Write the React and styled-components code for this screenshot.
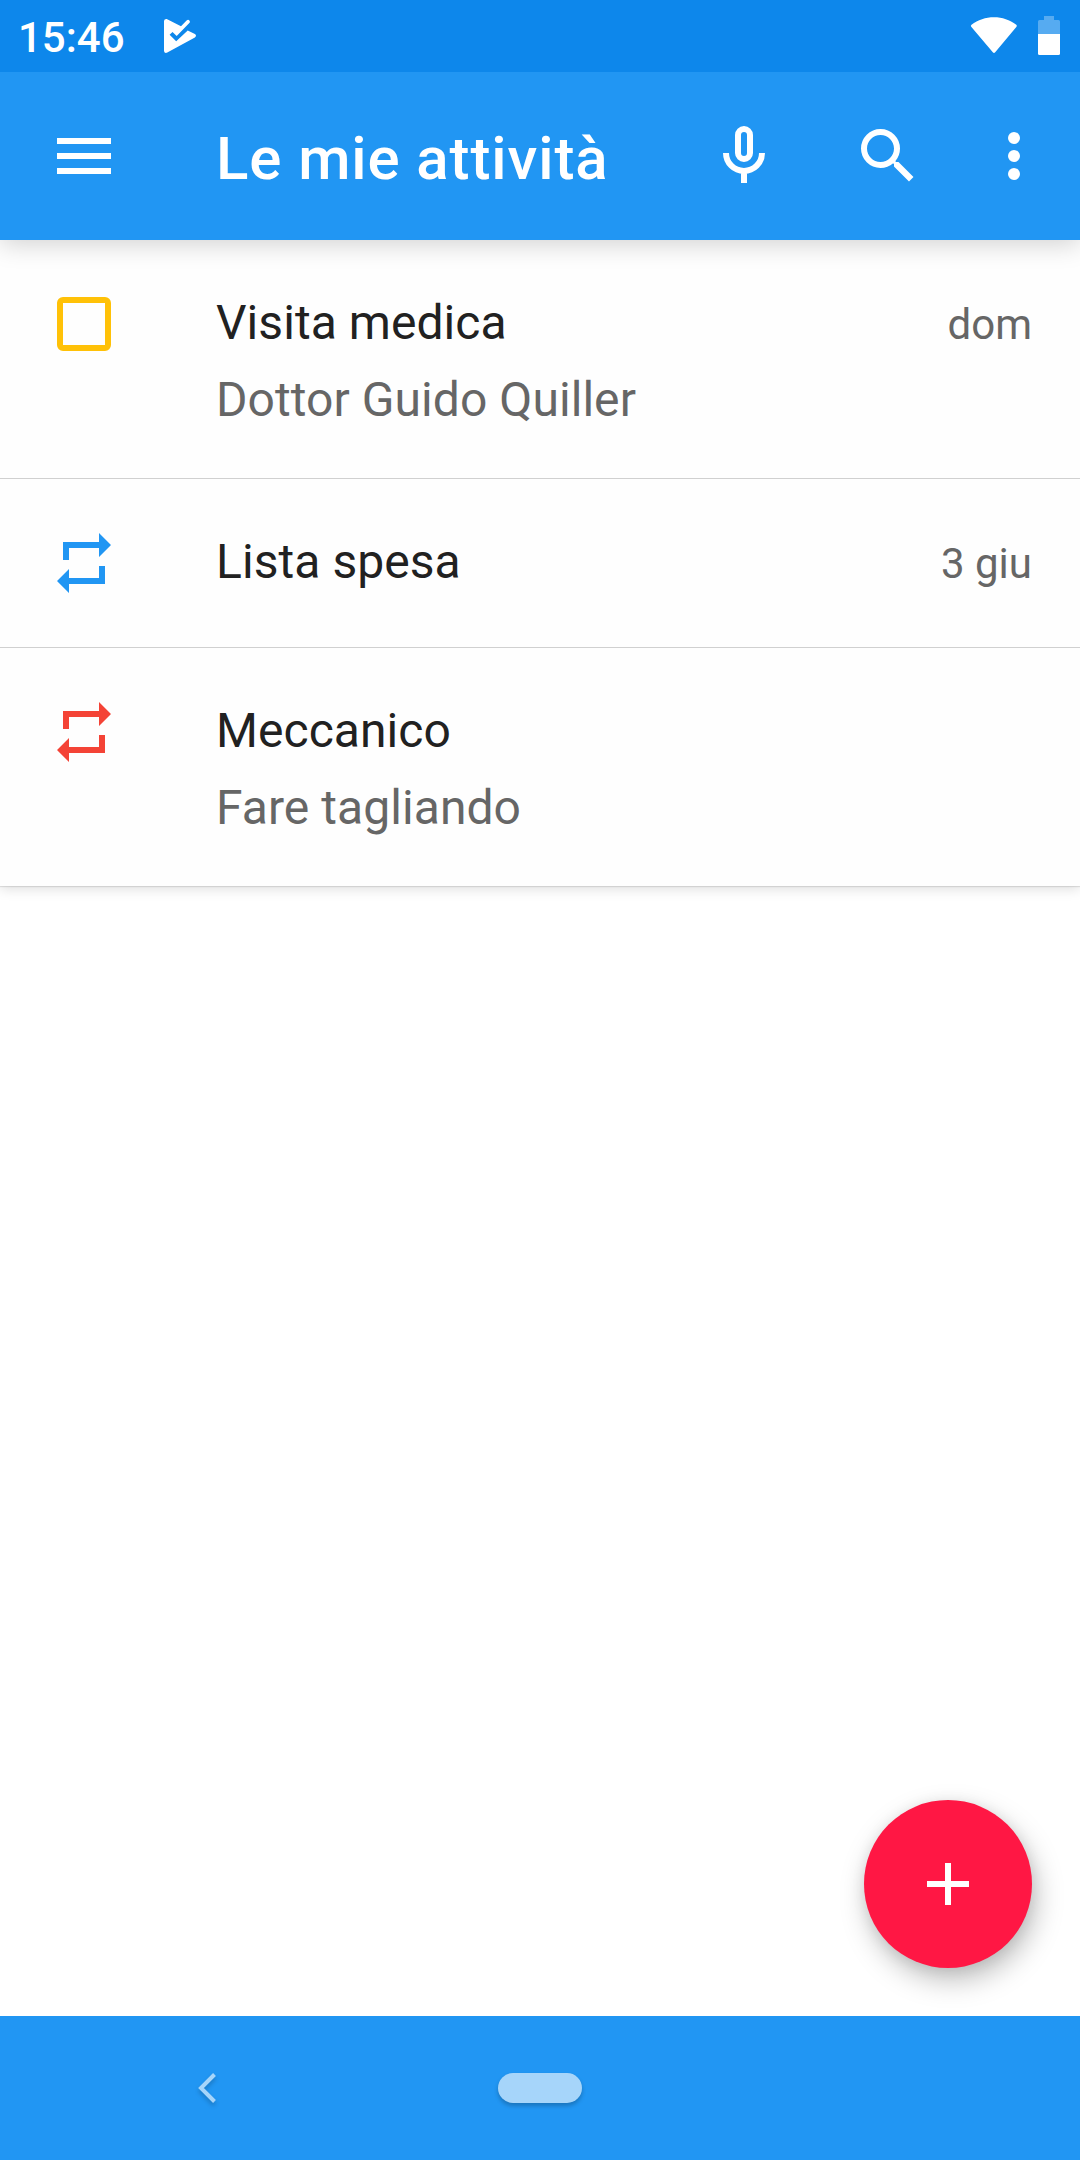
import styled, { createGlobalStyle } from 'styled-components'

const TASKS = [
	{ id: 1, icon: 'checkbox', color: '#ffc107', title: 'Visita medica', note: 'Dottor Guido Quiller', date: 'dom' },
	{ id: 2, icon: 'repeat', color: '#2196f3', title: 'Lista spesa', date: '3 giu' },
	{ id: 3, icon: 'repeat', color: '#f44336', title: 'Meccanico', note: 'Fare tagliando' }
]

const ICONS = {
	menu: <path d='M3 18h18v-2H3v2zm0-5h18v-2H3v2zm0-7v2h18V6H3z' />,
	mic: (
		<g fill='none' stroke='currentColor' strokeWidth='2'>
			<rect x='10' y='3' width='4' height='10' rx='2' />
			<path d='M6 11a6 6 0 0 0 12 0M12 17v4' />
		</g>
	),
	search: (
		<path d='M15.5 14h-.79l-.28-.27A6.471 6.471 0 0 0 16 9.5 6.5 6.5 0 1 0 9.5 16c1.61 0 3.09-.59 4.23-1.57l.27.28v.79l5 4.99L20.49 19l-4.99-5zm-6 0C7.01 14 5 11.99 5 9.5S7.01 5 9.5 5 14 7.01 14 9.5 11.99 14 9.5 14z' />
	),
	more: (
		<>
			<circle cx='12' cy='6' r='2' />
			<circle cx='12' cy='12' r='2' />
			<circle cx='12' cy='18' r='2' />
		</>
	),
	checkbox: (
		<path
			fillRule='evenodd'
			d='M5 3h14a2 2 0 0 1 2 2v14a2 2 0 0 1-2 2H5a2 2 0 0 1-2-2V5a2 2 0 0 1 2-2zm0 2v14h14V5z'
		/>
	),
	repeat: <path d='M7 7h10v3l4-4-4-4v3H5v6h2V7zm10 10H7v-3l-4 4 4 4v-3h12v-6h-2v4z' />,
	add: <path d='M19 13h-6v6h-2v-6H5v-2h6V5h2v6h6v2z' />
}

function Icon({ name, color }) {
	return (
		<IconSvg viewBox='0 0 24 24' $color={color}>
			{ICONS[name]}
		</IconSvg>
	)
}

function StatusBar() {
	return (
		<StatusWrapper>
			<Clock>15:46</Clock>
			<svg width='34' height='36' viewBox='0 0 34 36' fill='#fff'>
				<path d='M1 3Q1.200.8 3.700 1L18 8.200l5.600-5.800q1.600-1.200 2.700 0 1.200 1.200 0 2.600L13.700 17.900l-4.200-3.800-2.900 2.600 6.600 6.600 11.500-10.900 7.200 3.700q2.200 1.600 0 3.300L4.300 34.600Q1.400 35.600 1 33z' />
			</svg>
			<StatusIcons>
				<svg width='48' height='38' viewBox='0 0 48 38' fill='#fff'>
					<path d='M1.500 7.700C8 2.800 15.600.2 24 .2s15.600 2.600 22.300 7.500q1 .9.200 2.100L25.200 35.300q-1.200 1.500-2.400 0L1.200 9.800q-.8-1.200.3-2.100z' />
				</svg>
				<svg width='22' height='40' viewBox='0 0 22 40' fill='#fff'>
					<path d='M6 0h10v4h4.500Q22 4 22 5.500V18H0V5.500Q0 4 1.500 4H6z' opacity='.3' />
					<path d='M0 18h22v19.500q0 1.500-1.500 1.500h-19Q0 39 0 37.500z' />
				</svg>
			</StatusIcons>
		</StatusWrapper>
	)
}

function TaskRow({ task }) {
	return (
		<Row>
			<Icon name={task.icon} color={task.color} />
			<RowText>
				<TaskTitle>{task.title}</TaskTitle>
				{task.note && <TaskNote>{task.note}</TaskNote>}
			</RowText>
			{task.date && <TaskDate>{task.date}</TaskDate>}
		</Row>
	)
}

export default function App() {
	return (
		<Screen>
			<GlobalStyle />
			<StatusBar />
			<AppBar>
				<Icon name='menu' />
				<PageTitle>Le mie attività</PageTitle>
				<Actions>
					<Icon name='mic' />
					<Icon name='search' />
					<Icon name='more' />
				</Actions>
			</AppBar>
			<Content>
				<TaskList>
					{TASKS.map(task => (
						<TaskRow key={task.id} task={task} />
					))}
				</TaskList>
				<AddButton aria-label='Aggiungi'>
					<Icon name='add' />
				</AddButton>
			</Content>
			<NavBar>
				<BackArrow viewBox='0 0 20 30'>
					<path d='M16.500 1.500 3 15l13.500 13.500' />
				</BackArrow>
				<HomePill />
			</NavBar>
		</Screen>
	)
}

const GlobalStyle = createGlobalStyle`
	* {
		box-sizing: border-box;
		margin: 0;
		padding: 0;
	}

	body {
		background: #fff;
		font-family: Roboto, sans-serif;
	}

	svg {
		display: block;
		flex-shrink: 0;
	}
`

const Screen = styled.div`
	width: 1080px;
	height: 2160px;
	display: flex;
	flex-direction: column;
	background: #fff;
	overflow: hidden;
`

const IconSvg = styled.svg`
	width: 72px;
	height: 72px;
	color: ${({ $color }) => $color || '#fff'};
	fill: currentColor;
`

const StatusWrapper = styled.div`
	height: 72px;
	flex-shrink: 0;
	display: flex;
	align-items: center;
	padding: 0 20px 0 18px;
	background: #0d87eb;
	z-index: 3;
`

const Clock = styled.span`
	width: 145px;
	font-size: 42px;
	font-weight: 500;
	line-height: 72px;
	padding-top: 4px;
	color: #fff;
`

const StatusIcons = styled.div`
	margin-left: auto;
	display: flex;
	align-items: center;
	gap: 20px;
`

const AppBar = styled.header`
	height: 168px;
	flex-shrink: 0;
	display: flex;
	align-items: center;
	padding: 0 30px 0 48px;
	background: #2196f3;
	box-shadow: 0 4px 24px rgba(0, 0, 0, 0.18);
	z-index: 2;
`

const PageTitle = styled.h1`
	margin-left: 96px;
	padding-top: 5px;
	font-size: 60px;
	font-weight: 500;
	line-height: 72px;
	letter-spacing: 0.9px;
	color: #fff;
`

const Actions = styled.div`
	margin-left: auto;
	display: flex;

	svg + svg {
		margin-left: 72px;
	}

	svg:last-child {
		margin-left: 54px;
	}
`

const Content = styled.main`
	flex: 1;
	display: flex;
	flex-direction: column;
	justify-content: space-between;
`

const TaskList = styled.ul`
	list-style: none;
	background: #fefefe;
	box-shadow: 0 1px 1px rgba(0, 0, 0, 0.1), 0 3px 12px rgba(0, 0, 0, 0.13);
`

const Row = styled.li`
	display: flex;
	align-items: flex-start;
	min-height: 169px;
	padding: 48px 48px 36px;

	& + & {
		border-top: 1px solid #d0d0d0;
	}
`

const RowText = styled.div`
	flex: 1;
	margin-left: 96px;
	font-size: 48px;
	letter-spacing: 0.06px;
`

const TaskTitle = styled.p`
	line-height: 70px;
	color: #212121;
`

const TaskNote = styled.p`
	line-height: 84px;
	color: #666;
`

const TaskDate = styled.span`
	font-size: 42px;
	line-height: 74px;
	color: #666;
`

const AddButton = styled.button`
	width: 168px;
	height: 168px;
	margin: 0 48px 48px auto;
	display: flex;
	align-items: center;
	justify-content: center;
	border: none;
	border-radius: 50%;
	background: #ff1744;
	box-shadow: 4px 12px 28px rgba(0, 0, 0, 0.26), 0 2px 14px rgba(0, 0, 0, 0.08);
`

const NavBar = styled.nav`
	height: 144px;
	flex-shrink: 0;
	display: flex;
	align-items: center;
	padding-left: 198px;
	background: #2196f3;
	z-index: 1;
`

const BackArrow = styled.svg`
	width: 20px;
	height: 30px;
	fill: none;
	stroke: #a6d5fa;
	stroke-width: 4;
	filter: drop-shadow(0 3px 2px rgba(0, 0, 0, 0.2));
`

const HomePill = styled.div`
	width: 84px;
	height: 30px;
	margin-left: 280px;
	border-radius: 15px;
	background: #a6d5fa;
	box-shadow: 0 3px 4px rgba(0, 0, 0, 0.22);
`
